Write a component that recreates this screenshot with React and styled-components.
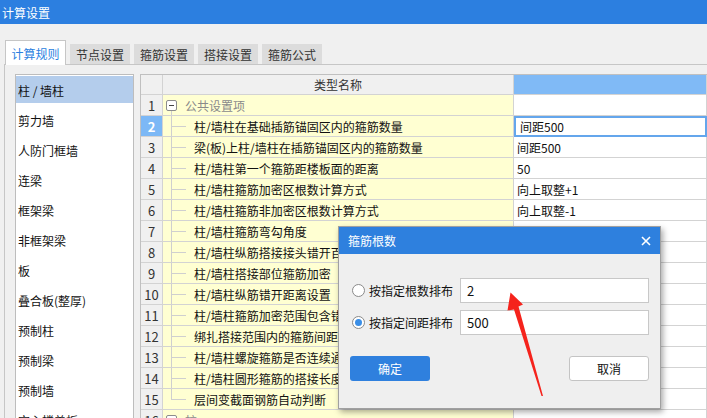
import React from 'react';
import styled, { createGlobalStyle, css } from 'styled-components';

const GlobalStyle = createGlobalStyle`
  html, body {
    margin: 0;
    padding: 0;
  }
  body {
    font-family: "Noto Sans CJK SC", "Noto Sans", sans-serif;
    font-size: 12px;
    color: #111;
  }
  * {
    box-sizing: border-box;
  }
`;

const StyledWindow = styled.div`
  position: relative;
  width: 707px;
  height: 418px;
  overflow: hidden;
  background: #f0f0f0;
  display: flex;
  flex-direction: column;
`;

const StyledTitleBar = styled.div`
  flex: none;
  height: 24px;
  padding-left: 2px;
  display: flex;
  align-items: center;
  background: #2c7fe0;
  color: #fff;
`;

const StyledTabs = styled.div`
  flex: none;
  height: 24px;
  margin-top: 16px;
  padding-left: 5px;
  display: flex;
  align-items: flex-end;
  gap: 4px;
`;

const StyledTab = styled.div`
  width: 60px;
  height: 20px;
  display: flex;
  align-items: center;
  justify-content: center;
  background: #dcdcdc;
  color: #333;

  ${({ $active }) =>
    $active &&
    css`
      position: relative;
      z-index: 1;
      width: 61px;
      height: 25px;
      margin-bottom: -1px;
      background: #fff;
      border: 1px solid #c6c6c6;
      border-bottom: none;
      color: #2b7fdf;
    `}
`;

const StyledPanel = styled.div`
  flex: 1;
  min-height: 0;
  margin-left: 4px;
  padding: 9px 0 0 10px;
  border-top: 1px solid #c6c6c6;
  border-left: 1px solid #c6c6c6;
  display: flex;
  align-items: flex-start;
  gap: 6px;
`;

const StyledList = styled.div`
  flex: none;
  width: 119px;
  height: 400px;
  padding: 1px 0;
  border: 1px solid #bdbdbd;
  background: #fff;
`;

const StyledListItem = styled.div`
  height: 27px;
  margin-bottom: 3px;
  padding: 2px 0 0 2px;
  display: flex;
  align-items: center;
  white-space: nowrap;

  ${({ $selected }) =>
    $selected &&
    css`
      background: #b4cdec;
    `}
`;

const StyledGrid = styled.div`
  flex: 1;
  border-top: 1px solid #c0c0c0;
  border-left: 1px solid #c0c0c0;
  background: #fff;
`;

const StyledRow = styled.div`
  display: grid;
  grid-template-columns: 22px 351px 1fr;
  height: ${({ $header }) => ($header ? '20px' : '21px')};
`;

const StyledCell = styled.div`
  border-right: 1px solid #d3d3d3;
  border-bottom: 1px solid #d3d3d3;
  display: flex;
  align-items: center;
  white-space: nowrap;
  overflow: hidden;
`;

const StyledNumCell = styled(StyledCell)`
  justify-content: center;
  background: #f0f0f0;
  color: #333;
  font-size: 13px;

  ${({ $active }) =>
    $active &&
    css`
      background: #7cb8f6;
      color: #fff;
      font-weight: bold;
    `}
`;

const StyledHeadCell = styled(StyledCell)`
  justify-content: center;
  background: ${({ $blue }) => ($blue ? '#80baf6' : '#f0f0f0')};
  color: #333;
`;

const StyledNameCell = styled(StyledCell)`
  position: relative;
  padding-left: ${({ $group }) => ($group ? '3px' : '31px')};
  background: #ffffd2;

  ${({ $line }) =>
    $line &&
    css`
      &::before {
        content: '';
        position: absolute;
        left: 8px;
        top: ${$line === 'start' ? '15px' : '0'};
        bottom: ${$line === 'end' ? '10px' : '0'};
        border-left: 1px solid #cfcfcf;
      }
    `}

  ${({ $group }) =>
    !$group &&
    css`
      &::after {
        content: '';
        position: absolute;
        left: 8px;
        width: 15px;
        top: 10px;
        border-top: 1px solid #cfcfcf;
      }
    `}
`;

const StyledToggle = styled.span`
  position: relative;
  z-index: 1;
  width: 11px;
  height: 11px;
  margin-right: 8px;
  border: 1px solid #8c8c8c;
  border-radius: 2px;
  background: #fff;
  display: flex;
  align-items: center;
  justify-content: center;

  &::after {
    content: '';
    width: 5px;
    border-top: 1px solid #444;
  }
`;

const StyledGroupText = styled.span`
  color: #8a8a8a;
`;

const StyledValueCell = styled(StyledCell)`
  padding-left: 3px;

  ${({ $selected }) =>
    $selected &&
    css`
      padding-left: 6px;
      border: none;
      box-shadow: inset 0 0 0 2px #64a6ec;
    `}
`;

const StyledDialog = styled.div`
  position: absolute;
  left: 338px;
  top: 226px;
  width: 323px;
  height: 183px;
  border: 1px solid #a0a0a0;
  background: #efefef;
  box-shadow: 2px 3px 6px rgba(0, 0, 0, 0.35);
  display: flex;
  flex-direction: column;
`;

const StyledDialogTitle = styled.div`
  flex: none;
  height: 27px;
  padding: 0 9px;
  display: flex;
  align-items: center;
  justify-content: space-between;
  background: #2e80de;
  color: #fff;
`;

const StyledDialogBody = styled.div`
  padding: 24px 11px 0 13px;
  display: flex;
  flex-direction: column;
  gap: 7px;
`;

const StyledOption = styled.div`
  height: 25px;
  display: flex;
  align-items: center;
`;

const StyledRadio = styled.span`
  flex: none;
  width: 13px;
  height: 13px;
  margin-right: 4px;
  border: 1px solid #8a8a8a;
  border-radius: 50%;
  background: #fff;
  display: flex;
  align-items: center;
  justify-content: center;

  ${({ $checked }) =>
    $checked &&
    css`
      &::after {
        content: '';
        width: 7px;
        height: 7px;
        border-radius: 50%;
        background: #3a8ee6;
      }
    `}
`;

const StyledOptionLabel = styled.span`
  width: 91px;
  flex: none;
`;

const StyledInput = styled.input`
  width: 190px;
  height: 25px;
  padding: 0 6px;
  border: 1px solid #c8c8c8;
  background: #fff;
  font: inherit;
  font-size: 13px;
  color: #111;
  outline: none;
`;

const StyledButtons = styled.div`
  margin-top: 21px;
  padding: 0 11px;
  display: flex;
  justify-content: space-between;
`;

const StyledButton = styled.button`
  width: 80px;
  height: 25px;
  border-radius: 3px;
  font: inherit;
  font-size: 12px;
  border: 1px solid #c4c4c4;
  background: #fff;
  color: #111;

  ${({ $primary }) =>
    $primary &&
    css`
      border: none;
      background: #2f80de;
      color: #fff;
    `}
`;

const StyledArrow = styled.svg`
  position: absolute;
  left: 0;
  top: 0;
  pointer-events: none;
`;

const categories = [
  '柱 / 墙柱',
  '剪力墙',
  '人防门框墙',
  '连梁',
  '框架梁',
  '非框架梁',
  '板',
  '叠合板(整厚)',
  '预制柱',
  '预制梁',
  '预制墙',
  '空心楼盖板',
];

const rules = [
  ['柱/墙柱在基础插筋锚固区内的箍筋数量', '间距500'],
  ['梁(板)上柱/墙柱在插筋锚固区内的箍筋数量', '间距500'],
  ['柱/墙柱第一个箍筋距楼板面的距离', '50'],
  ['柱/墙柱箍筋加密区根数计算方式', '向上取整+1'],
  ['柱/墙柱箍筋非加密区根数计算方式', '向上取整-1'],
  ['柱/墙柱箍筋弯勾角度', ''],
  ['柱/墙柱纵筋搭接接头错开百分率', ''],
  ['柱/墙柱搭接部位箍筋加密', ''],
  ['柱/墙柱纵筋错开距离设置', ''],
  ['柱/墙柱箍筋加密范围包含错开距离', ''],
  ['绑扎搭接范围内的箍筋间距min(5d,100)', ''],
  ['柱/墙柱螺旋箍筋是否连续通过', ''],
  ['柱/墙柱圆形箍筋的搭接长度', ''],
  ['层间变截面钢筋自动判断', ''],
];

const tabs = ['计算规则', '节点设置', '箍筋设置', '搭接设置', '箍筋公式'];

const App = () => (
  <StyledWindow>
    <GlobalStyle />
    <StyledTitleBar>计算设置</StyledTitleBar>
    <StyledTabs>
      {tabs.map((tab, i) => (
        <StyledTab key={tab} $active={i === 0}>
          {tab}
        </StyledTab>
      ))}
    </StyledTabs>
    <StyledPanel>
      <StyledList>
        {categories.map((item, i) => (
          <StyledListItem key={item} $selected={i === 0}>
            {item}
          </StyledListItem>
        ))}
      </StyledList>
      <StyledGrid>
        <StyledRow $header>
          <StyledHeadCell />
          <StyledHeadCell>类型名称</StyledHeadCell>
          <StyledHeadCell $blue />
        </StyledRow>
        <StyledRow>
          <StyledNumCell>1</StyledNumCell>
          <StyledNameCell $group $line="start">
            <StyledToggle />
            <StyledGroupText>公共设置项</StyledGroupText>
          </StyledNameCell>
          <StyledValueCell />
        </StyledRow>
        {rules.map(([name, value], i) => (
          <StyledRow key={name}>
            <StyledNumCell $active={i === 0}>{i + 2}</StyledNumCell>
            <StyledNameCell $line={i === rules.length - 1 ? 'end' : 'mid'}>{name}</StyledNameCell>
            <StyledValueCell $selected={i === 0}>{value}</StyledValueCell>
          </StyledRow>
        ))}
        <StyledRow>
          <StyledNumCell>16</StyledNumCell>
          <StyledNameCell $group>
            <StyledToggle />
            <StyledGroupText>柱</StyledGroupText>
          </StyledNameCell>
          <StyledValueCell />
        </StyledRow>
      </StyledGrid>
    </StyledPanel>

    <StyledDialog>
      <StyledDialogTitle>
        <span>箍筋根数</span>
        <svg width="10" height="10" viewBox="0 0 10 10">
          <path d="M1 1 L9 9 M9 1 L1 9" stroke="#fff" strokeWidth="1.6" />
        </svg>
      </StyledDialogTitle>
      <StyledDialogBody>
        <StyledOption>
          <StyledRadio />
          <StyledOptionLabel>按指定根数排布</StyledOptionLabel>
          <StyledInput defaultValue="2" readOnly />
        </StyledOption>
        <StyledOption>
          <StyledRadio $checked />
          <StyledOptionLabel>按指定间距排布</StyledOptionLabel>
          <StyledInput defaultValue="500" readOnly />
        </StyledOption>
      </StyledDialogBody>
      <StyledButtons>
        <StyledButton $primary>确定</StyledButton>
        <StyledButton>取消</StyledButton>
      </StyledButtons>
    </StyledDialog>

    <StyledArrow width="707" height="418" viewBox="0 0 707 418">
      <polygon
        points="510.5,292.5 523,304.5 518.5,306.5 543,396 541.5,396 514,309.5 507.5,310.5"
        fill="#f5231c"
      />
    </StyledArrow>
  </StyledWindow>
);

export default App;
